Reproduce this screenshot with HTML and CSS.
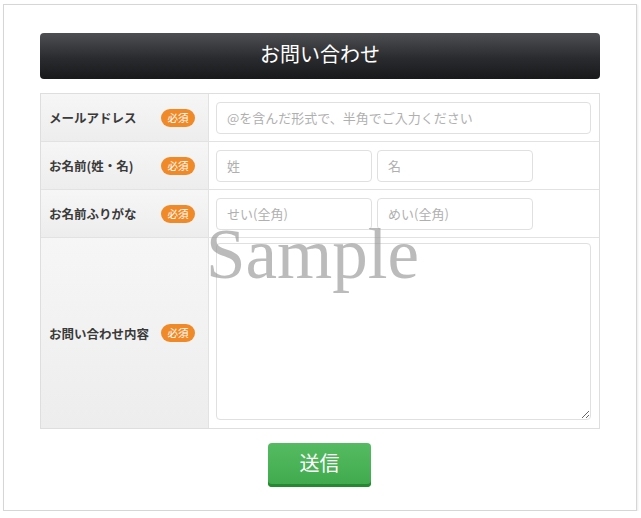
FILE: index.html
```html
<!DOCTYPE html>
<html lang="ja">
<head>
<meta charset="utf-8">
<link rel="stylesheet" href="styles.css">
</head>
<body>
<div class="frame">
  <h1 class="title">お問い合わせ</h1>
  <div class="form">
    <div class="row">
      <div class="label"><span>メールアドレス</span><span class="req">必須</span></div>
      <div class="field"><input class="input wide" type="text" placeholder="@を含んだ形式で、半角でご入力ください"></div>
    </div>
    <div class="row">
      <div class="label"><span>お名前(姓・名)</span><span class="req">必須</span></div>
      <div class="field"><input class="input half" type="text" placeholder="姓"><input class="input half" type="text" placeholder="名"></div>
    </div>
    <div class="row">
      <div class="label"><span>お名前ふりがな</span><span class="req">必須</span></div>
      <div class="field"><input class="input half" type="text" placeholder="せい(全角)"><input class="input half" type="text" placeholder="めい(全角)"></div>
    </div>
    <div class="row tall">
      <div class="label"><span>お問い合わせ内容</span><span class="req">必須</span></div>
      <div class="field"><textarea class="input area"></textarea></div>
    </div>
  </div>
  <div class="actions"><button class="submit" type="button">送信</button></div>
  <div class="watermark">Sample</div>
</div>
</body>
</html>
```

FILE: styles.css
```css
html, body {
  margin: 0;
  padding: 0;
  background: #fff;
}
body {
  font-family: "Noto Sans CJK JP", "Noto Sans", sans-serif;
  color: #333;
}
.frame {
  position: relative;
  margin: 4px 0 0 3px;
  width: 634px;
  height: 507px;
  border: 1px solid #d6d6d6;
  box-shadow: 1px 1px 2px rgba(0,0,0,0.08);
  padding: 28px 36px 0 36px;
  box-sizing: border-box;
}
.title {
  margin: 0;
  height: 46px;
  border-radius: 4px;
  background: linear-gradient(#4d4f53, #2a2b2e 55%, #18191b);
  color: #fff;
  font-size: 20px;
  font-weight: normal;
  line-height: 42px;
  text-align: center;
}
.form {
  margin-top: 14px;
  border: 1px solid #dedede;
}
.row {
  display: flex;
  height: 47px;
  border-bottom: 1px solid #e2e2e2;
}
.row.tall {
  height: 190px;
  border-bottom: none;
}
.label {
  width: 168px;
  flex: none;
  display: flex;
  align-items: center;
  padding: 0 13px 0 8px;
  box-sizing: border-box;
  background: linear-gradient(#f6f6f6, #ededed);
  border-right: 1px solid #e2e2e2;
  font-size: 12.5px;
  font-weight: bold;
  color: #3a3a3a;
}
.req {
  margin-left: auto;
  width: 34px;
  height: 18px;
  border-radius: 9px;
  background: #f08a28;
  color: #fff;
  font-size: 10.5px;
  font-weight: normal;
  line-height: 18px;
  text-align: center;
}
.field {
  flex: 1;
  display: flex;
  align-items: center;
  gap: 5px;
  padding: 0 8px 0 7px;
}
.input {
  box-sizing: border-box;
  height: 32px;
  border: 1px solid #e0e0e0;
  border-radius: 4px;
  padding: 0 10px;
  font-family: "Noto Sans CJK JP", "Noto Sans", sans-serif;
  font-size: 13px;
  color: #333;
  background: #fff;
  outline: none;
}
.input::placeholder {
  color: #b0b0b0;
}
.wide {
  width: 375px;
}
.half {
  width: 156px;
}
.area {
  width: 375px;
  height: 177px;
  margin-top: -3px;
  resize: both;
}
.actions {
  display: flex;
  justify-content: center;
  margin-top: 14px;
}
.submit {
  width: 103px;
  height: 44px;
  margin-left: -1px;
  border: none;
  border-radius: 4px;
  background: linear-gradient(#55bb62, #3fa94d);
  box-shadow: inset 0 -3px 0 #24892f;
  color: #fff;
  font-family: "Noto Sans CJK JP", sans-serif;
  font-size: 20px;
  padding: 0 0 6px 0;
}
.watermark {
  position: absolute;
  left: 202px;
  top: 214px;
  font-family: "Liberation Serif", serif;
  font-size: 71px;
  line-height: 1;
  color: rgba(150, 150, 150, 0.65);
  pointer-events: none;
}
```
